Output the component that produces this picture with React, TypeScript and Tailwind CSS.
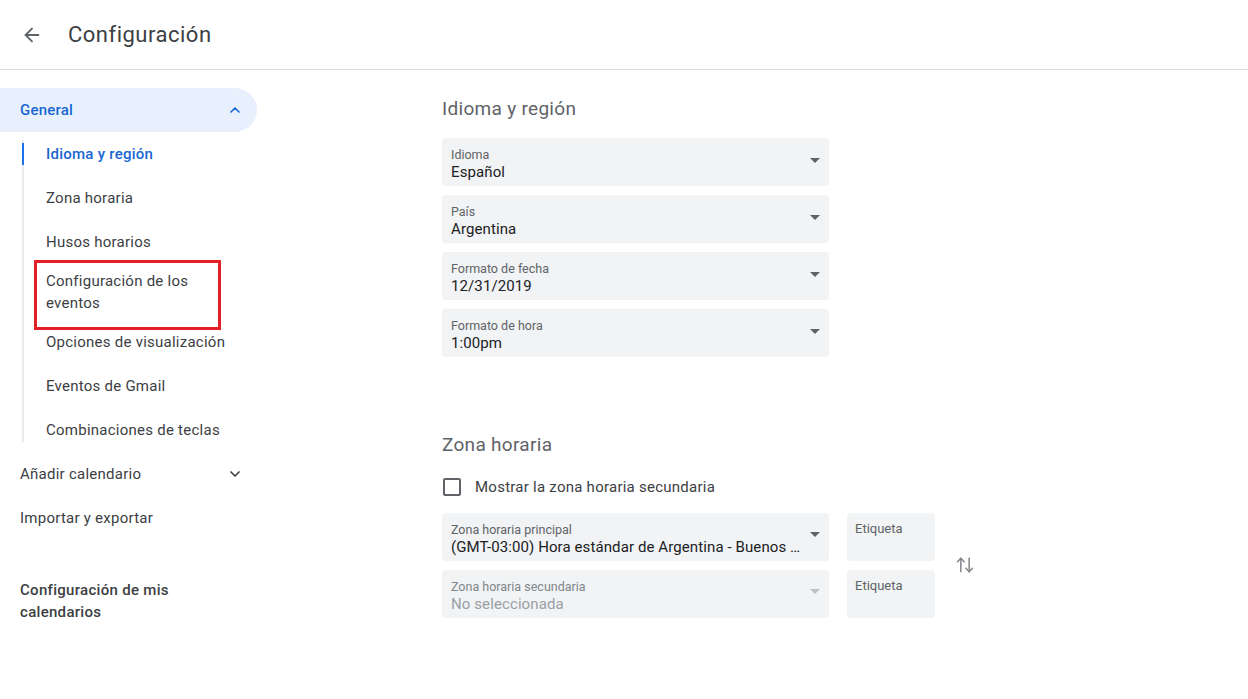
import { ArrowLeft, ChevronUp, ChevronDown, ArrowUpDown } from 'lucide-react';

const FONT = { fontFamily: 'Roboto, "Noto Sans", Arial, sans-serif' };

function Caret({ light }: { light?: boolean }) {
  return (
    <svg width="10" height="5" viewBox="0 0 10 5" className={light ? 'text-[#bdc1c6]' : 'text-[#5f6368]'}>
      <path d="M0 0h10L5 5z" fill="currentColor" />
    </svg>
  );
}

function Select({ label, value, muted }: { label: string; value: string; muted?: boolean }) {
  return (
    <div className="flex h-12 w-[387px] items-center rounded-[4px] bg-[#f1f3f4] pl-[9px] pr-[9px]">
      <div className="min-w-0 flex-1 pt-[5px]">
        <div className={`text-[12.5px] leading-[15px] ${muted ? 'text-[#80868b]' : 'text-[#5f6368]'}`}>{label}</div>
        <div className={`truncate text-[15px] leading-[20px] tracking-[0.1px] ${muted ? 'text-[#9aa0a6]' : 'text-[#202124]'}`}>
          {value}
        </div>
      </div>
      <div className="ml-2 mt-[-4px]">
        <Caret light={muted} />
      </div>
    </div>
  );
}

function Etiqueta() {
  return (
    <div className="h-12 w-[88px] rounded-[4px] bg-[#f1f3f4] px-2 pt-[8px] text-[13px] leading-[15px] text-[#5f6368]">
      Etiqueta
    </div>
  );
}

function SubItem({ children, active, tall }: { children: React.ReactNode; active?: boolean; tall?: boolean }) {
  return (
    <div className={`relative flex items-center pl-[24px] ${tall ? 'h-14' : 'h-11'}`}>
      {active && <div className="absolute left-0 top-[11px] h-[22px] w-[2px] bg-[#1a73e8]" />}
      <span
        className={`text-[15px] leading-[22px] tracking-[0.25px] ${active ? 'font-medium text-[#1967d2]' : 'text-[#3c4043]'}`}
      >
        {children}
      </span>
    </div>
  );
}

export default function App() {
  return (
    <div className="h-[699px] w-[1248px] overflow-hidden bg-white" style={FONT}>
      <header className="flex h-[70px] items-center border-b border-[#dadce0] pl-[21px]">
        <ArrowLeft size={22} strokeWidth={2} className="text-[#5f6368]" />
        <h1 className="ml-[25px] text-[22px] tracking-[0.5px] text-[#3c4043]">Configuración</h1>
      </header>

      <div className="flex">
        <nav className="w-[257px] shrink-0 pt-[18px]">
          <div className="flex h-11 items-center justify-between rounded-r-full bg-[#e8f0fe] pl-5 pr-[14px]">
            <span className="text-[15px] font-medium tracking-[0.2px] text-[#1967d2]">General</span>
            <ChevronUp size={16} strokeWidth={2.5} className="text-[#1967d2]" />
          </div>
          <div className="relative ml-[22px]">
            <div className="absolute left-0 top-[8px] h-[302px] w-[2px] bg-[#e8eaed]" />
            <SubItem active>Idioma y región</SubItem>
            <SubItem>Zona horaria</SubItem>
            <SubItem>Husos horarios</SubItem>
            <div className="relative">
              <div className="pointer-events-none absolute left-[12px] top-[-4px] h-[70px] w-[187px] border-[3px] border-[#e32028]" />
              <SubItem tall>
                <>
                  Configuración de los
                  <br />
                  eventos
                </>
              </SubItem>
            </div>
            <SubItem>Opciones de visualización</SubItem>
            <SubItem>Eventos de Gmail</SubItem>
            <SubItem>Combinaciones de teclas</SubItem>
          </div>
          <div className="flex h-11 items-center justify-between pl-5 pr-[14px]">
            <span className="text-[15px] tracking-[0.25px] text-[#3c4043]">Añadir calendario</span>
            <ChevronDown size={16} strokeWidth={2.5} className="text-[#3c4043]" />
          </div>
          <div className="flex h-11 items-center pl-5">
            <span className="text-[15px] tracking-[0.25px] text-[#3c4043]">Importar y exportar</span>
          </div>
          <div className="mt-[39px] pl-5 text-[15px] font-medium leading-[22px] tracking-[0.3px] text-[#3c4043]">
            Configuración de mis
            <br />
            calendarios
          </div>
        </nav>

        <main className="pl-[185px] pt-[25px]">
          <h2 className="text-[19px] leading-[28px] tracking-[0.3px] text-[#5f6368]">Idioma y región</h2>
          <div className="mt-[15px] flex flex-col gap-[9px]">
            <Select label="Idioma" value="Español" />
            <Select label="País" value="Argentina" />
            <Select label="Formato de fecha" value="12/31/2019" />
            <Select label="Formato de hora" value="1:00pm" />
          </div>

          <h2 className="mt-[74px] text-[19px] leading-[28px] tracking-[0.3px] text-[#5f6368]">Zona horaria</h2>
          <div className="mt-[17px] flex items-center">
            <div className="ml-[1px] h-[18px] w-[18px] rounded-[2px] border-2 border-[#5f6368]" />
            <span className="ml-[14px] text-[15px] tracking-[0.25px] text-[#3c4043]">Mostrar la zona horaria secundaria</span>
          </div>
          <div className="mt-[14px] flex items-center">
            <div className="flex flex-col gap-[9px]">
              <div className="flex gap-[18px]">
                <Select label="Zona horaria principal" value="(GMT-03:00) Hora estándar de Argentina - Buenos Aires" />
                <Etiqueta />
              </div>
              <div className="flex gap-[18px]">
                <Select muted label="Zona horaria secundaria" value="No seleccionada" />
                <Etiqueta />
              </div>
            </div>
            <ArrowUpDown size={20} strokeWidth={1.8} className="ml-[20px] text-[#80868b]" />
          </div>
        </main>
      </div>
    </div>
  );
}
